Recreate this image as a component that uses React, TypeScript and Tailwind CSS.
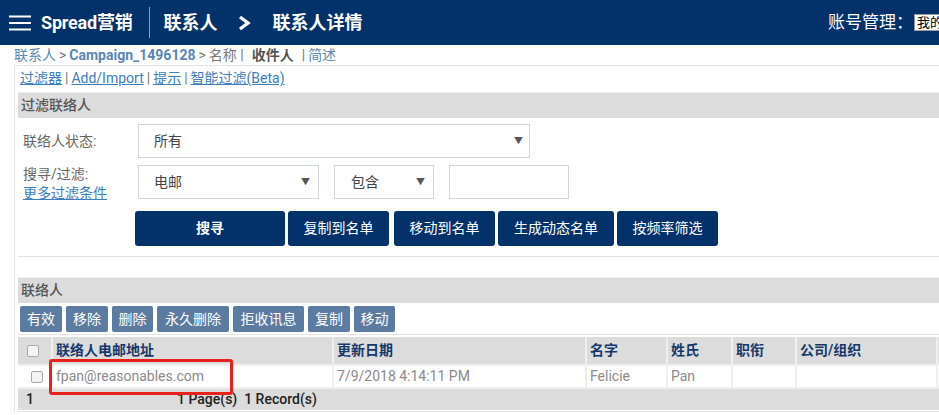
import React from "react";

const font = "font-['Roboto','Noto_Sans_CJK_SC',sans-serif]";

function Caret() {
  return <span className="text-[9px] leading-none text-[#555]">▼</span>;
}

function Check({ className = "" }: { className?: string }) {
  return (
    <span
      className={`inline-block h-[12px] w-[12px] rounded-[2px] border border-[#a9a9a9] bg-[#f4f4f4] ${className}`}
    />
  );
}

const actions = [
  { label: "有效", w: "w-[42px]" },
  { label: "移除", w: "w-[42px]" },
  { label: "删除", w: "w-[41px]" },
  { label: "永久删除", w: "w-[72px]" },
  { label: "拒收讯息", w: "w-[71px]" },
  { label: "复制", w: "w-[42px]" },
  { label: "移动", w: "w-[41px]" }
];

const columns = [
  { label: "联络人电邮地址", w: "w-[281px]" },
  { label: "更新日期", w: "w-[253px]" },
  { label: "名字", w: "w-[81px]" },
  { label: "姓氏", w: "w-[65px]" },
  { label: "职衔", w: "w-[64px]" },
  { label: "公司/组织", w: "w-[141px]" }
];

const row = ["fpan@reasonables.com", "7/9/2018 4:14:11 PM", "Felicie", "Pan", "", ""];

export default function App() {
  return (
    <div className={`relative h-[415px] w-[939px] overflow-hidden bg-white ${font}`}>
      {/* top bar */}
      <div className="flex h-[45px] items-center overflow-hidden bg-[#03326b] text-white">
        <svg className="ml-[9px] shrink-0" width="22" height="16" viewBox="0 0 22 16">
          <rect x="0" y="0.5" width="22" height="2" fill="#fff" />
          <rect x="0" y="7" width="22" height="2" fill="#fff" />
          <rect x="0" y="13.5" width="22" height="2" fill="#fff" />
        </svg>
        <span className="ml-[10px] text-[18px] font-bold tracking-[-0.2px]">Spread营销</span>
        <span className="ml-[16px] h-[31px] w-px bg-[#8c9fbb]" />
        <span className="ml-[14px] text-[18px] font-bold">联系人</span>
        <svg className="ml-[19px]" width="15" height="16" viewBox="0 0 15 16">
          <path d="M3 2 L11 8 L3 14" stroke="#fff" strokeWidth="3.4" fill="none" />
        </svg>
        <span className="ml-[21px] text-[18px] font-bold">联系人详情</span>
        <span className="ml-auto whitespace-nowrap text-[17px]">账号管理：</span>
        <span className="-mr-[40px] ml-[1px] flex h-[17px] w-[65px] shrink-0 items-center border border-[#999] bg-white px-[2px] text-[13px] leading-none text-black">
          我的账号
        </span>
      </div>

      {/* breadcrumb */}
      <div className="flex h-[20px] items-center pl-[14px] text-[14px] text-[#6a6a6a]">
        <span className="text-[#5a86b3]">联系人</span>
        <span className="mx-[3px] text-[#777]">&gt;</span>
        <span className="font-bold text-[#5a86b3]">Campaign_1496128</span>
        <span className="mx-[3px] text-[#777]">&gt;</span>
        <span className="text-[#777]">名称 |</span>
        <span className="ml-[8px] font-bold text-[#555]">收件人</span>
        <span className="ml-[8px] text-[#777]">|</span>
        <span className="ml-[3px] text-[#5a86b3]">简述</span>
      </div>

      {/* main container */}
      <div className="ml-[14px] border-l border-t border-[#e3e3e3] pl-[3px]">
        <div className="flex h-[25px] items-center pl-[2px] text-[14px] text-[#777]">
          <span className="text-[#3d7dbd] underline">过滤器</span>
          <span className="mx-[3px]">|</span>
          <span className="text-[#3d7dbd] underline">Add/Import</span>
          <span className="mx-[3px]">|</span>
          <span className="text-[#3d7dbd] underline">提示</span>
          <span className="mx-[3px]">|</span>
          <span className="text-[#3d7dbd] underline">智能过滤(Beta)</span>
        </div>

        {/* filter box */}
        <div className="mt-[1px] border-b border-[#e3e3e3] pb-[10px]">
          <div className="flex h-[26px] items-center border-t border-[#eee] bg-[#dcdcdc] pl-[3px] text-[14px] font-medium text-[#555]">
            过滤联络人
          </div>
          <div className="flex items-center pt-[6px]">
            <span className="w-[120px] pl-[5px] text-[14px] text-[#666]">联络人状态:</span>
            <div className="flex h-[34px] w-[392px] items-center justify-between border border-[#d3d5dd] pl-[15px] pr-[6px] text-[14px] text-[#444]">
              <span>所有</span>
              <Caret />
            </div>
          </div>
          <div className="mt-[7px] flex items-start">
            <div className="w-[120px] pl-[5px] text-[14px] leading-[19px] text-[#666]">
              <div>搜寻/过滤:</div>
              <div className="text-[#3d7dbd] underline">更多过滤条件</div>
            </div>
            <div className="flex h-[34px] w-[181px] items-center justify-between border border-[#d3d5dd] pl-[15px] pr-[8px] text-[14px] text-[#444]">
              <span>电邮</span>
              <Caret />
            </div>
            <div className="ml-[15px] flex h-[34px] w-[100px] items-center justify-between border border-[#d3d5dd] pl-[16px] pr-[8px] text-[14px] text-[#444]">
              <span>包含</span>
              <Caret />
            </div>
            <div className="ml-[15px] h-[34px] w-[120px] border border-[#d3d5dd]" />
          </div>
          <div className="ml-[117px] mt-[8px] flex gap-[3px] text-[14px] text-white">
            <div className="flex h-[35px] w-[150px] items-center justify-center rounded-[3px] bg-[#03326b] font-bold">搜寻</div>
            <div className="flex h-[35px] w-[101px] items-center justify-center rounded-[3px] bg-[#03326b]">复制到名单</div>
            <div className="ml-[2px] flex h-[35px] w-[101px] items-center justify-center rounded-[3px] bg-[#03326b]">移动到名单</div>
            <div className="flex h-[35px] w-[116px] items-center justify-center rounded-[3px] bg-[#03326b]">生成动态名单</div>
            <div className="flex h-[35px] w-[101px] items-center justify-center rounded-[3px] bg-[#03326b]">按频率筛选</div>
          </div>
        </div>

        {/* contacts */}
        <div className="mt-[20px] flex h-[26px] items-center border-t border-[#eee] bg-[#dcdcdc] pl-[3px] text-[14px] font-medium text-[#555]">
          联络人
        </div>
        <div className="flex gap-[4px] pl-[2px] pt-[3px] text-[14px] text-white">
          {actions.map((a) => (
            <div
              key={a.label}
              className={`flex h-[26px] ${a.w} items-center justify-center rounded-[2px] bg-[#5b7ba0]`}
            >
              {a.label}
            </div>
          ))}
        </div>
        <div className="mt-[2px] border-t border-[#e6e6e6] pt-[2px]">
          <div className="flex h-[27px] bg-[#dcdcdc] text-[14px] font-bold text-[#16386a]">
            <div className="flex w-[35px] items-center justify-center border-r-2 border-[#efefef] pr-[3px]">
              <Check />
            </div>
            {columns.map((c) => (
              <div key={c.label} className={`flex ${c.w} items-center border-r-2 border-[#efefef] pl-[3px]`}>
                {c.label}
              </div>
            ))}
            <div className="flex-1" />
          </div>
          <div className="flex h-[25px] border-b-2 border-t-2 border-[#efefef] text-[14px] text-[#8a8a8a]">
            <div className="flex w-[35px] items-center justify-end border-r-2 border-[#efefef] pr-[8px]">
              <Check />
            </div>
            {columns.map((c, i) => (
              <div key={c.label} className={`flex ${c.w} items-center border-r-2 border-[#efefef] pl-[3px]`}>
                {row[i]}
              </div>
            ))}
            <div className="flex-1" />
          </div>
          <div className="flex h-[21px] items-center bg-[#dcdcdc] text-[14px] font-medium text-[#222]">
            <span className="w-[159px] pl-[8px]">1</span>
            <span>1 Page(s)&nbsp; 1 Record(s)</span>
          </div>
          <div className="h-[2px] border-b border-[#e3e3e3]" />
        </div>
      </div>

      {/* annotation */}
      <div className="absolute left-[49px] top-[359px] h-[36px] w-[184px] rounded-[3px] border-[3px] border-[#e8221b]" />
    </div>
  );
}
